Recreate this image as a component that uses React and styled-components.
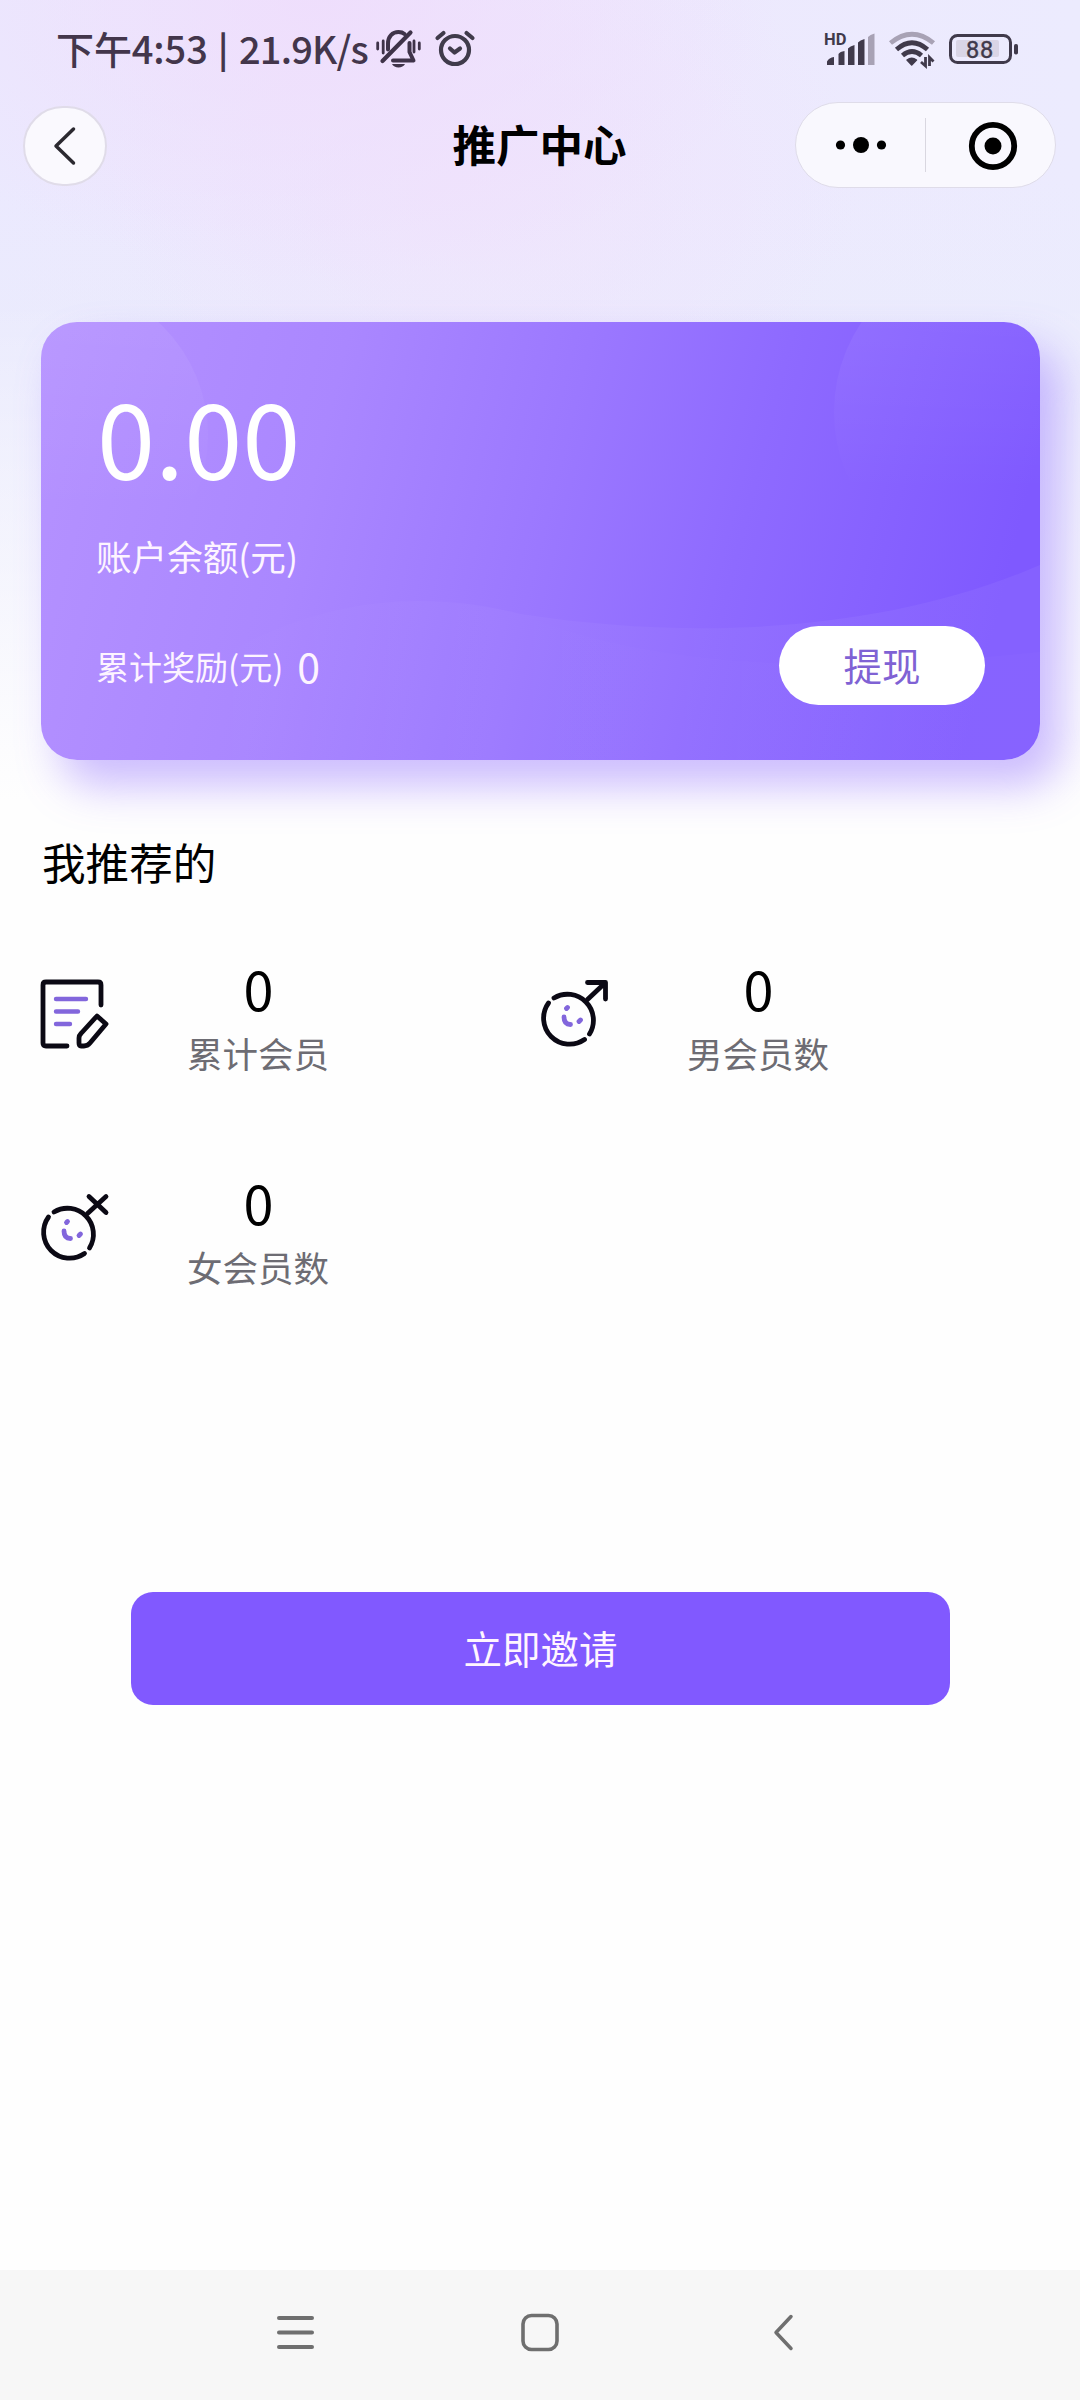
import styled, { createGlobalStyle } from 'styled-components';

const GlobalStyle = createGlobalStyle`
  * {
    box-sizing: border-box;
  }

  body {
    margin: 0;
    background: #fefefe;
    font-family: 'Noto Sans CJK SC', sans-serif;
  }

  button {
    border: 0;
    padding: 0;
    font-family: inherit;
  }

  svg {
    display: block;
    flex: none;
    overflow: visible;
  }
`;

const Page = styled.div`
  display: flex;
  flex-direction: column;
  width: 1080px;
  height: 2400px;
  overflow: hidden;
  background:
    linear-gradient(180deg, rgba(254, 254, 254, 0) 300px, #fefefe 800px),
    radial-gradient(ellipse 460px 280px at 320px 0, rgba(239, 221, 252, 0.9), rgba(239, 221, 252, 0)),
    radial-gradient(ellipse 380px 260px at 480px 180px, rgba(240, 226, 252, 0.7), rgba(240, 226, 252, 0)),
    linear-gradient(180deg, rgba(234, 237, 252, 0) 180px, rgba(234, 237, 252, 0.45) 330px),
    linear-gradient(90deg, #ebe9fe, #ede8fd 40%, #ecebfe);
`;

const StatusBar = styled.div`
  display: flex;
  justify-content: space-between;
  align-items: center;
  height: 98px;
  padding: 0 62px 0 56px;
  color: #43364b;
`;

const StatusGroup = styled.div`
  display: flex;
  align-items: center;
  gap: ${({ $gap }) => $gap || 0}px;
`;

const StatusText = styled.span`
  width: ${({ $width }) => $width}px;
  padding-bottom: 3px;
  font-size: 38px;
  font-weight: 500;
  line-height: 54px;
  letter-spacing: ${({ $spacing }) => $spacing || 0}px;
  white-space: nowrap;
`;

const StatusSeparator = styled.span`
  width: 21px;
  padding-bottom: 4px;
  font-size: 35px;
  font-weight: 700;
  line-height: 54px;
`;

const StatusIcons = styled.div`
  display: flex;
  align-items: center;
  gap: 14px;
`;

const NavBar = styled.header`
  display: flex;
  justify-content: space-between;
  align-items: center;
  height: 94px;
  padding: 0 24px 0 23px;
`;

const NavSide = styled.div`
  display: flex;
  width: 261px;
  justify-content: ${({ $end }) => ($end ? 'flex-end' : 'flex-start')};
`;

const BackButton = styled.button`
  display: flex;
  align-items: center;
  justify-content: center;
  width: 84px;
  height: 80px;
  margin-top: 1px;
  border: 2px solid #e0dce9;
  border-radius: 42px;
  background: #faf9fe;
`;

const Title = styled.h1`
  margin: 0;
  padding-bottom: 2px;
  font-size: 43.5px;
  font-weight: 700;
  line-height: 64px;
  color: #000;
`;

const Capsule = styled.div`
  display: flex;
  align-items: center;
  width: 261px;
  height: 86px;
  border: 1px solid #dfdce9;
  border-radius: 43px;
  background: #f9f8fe;
`;

const CapsuleButton = styled.button`
  display: flex;
  width: 129px;
  align-items: center;
  justify-content: center;
  padding-left: ${({ $shift }) => $shift || 0}px;
  background: none;
`;

const Divider = styled.span`
  width: 1px;
  height: 54px;
  background: #d9d7e0;
`;

const Content = styled.main`
  display: flex;
  flex: 1;
  flex-direction: column;
  padding: 130px 40px 0 41px;
`;

const CardShadow = styled.div`
  border-radius: 36px;
  box-shadow: 20px 26px 44px rgba(130, 90, 255, 0.4);
`;

const Card = styled.section`
  display: flex;
  flex-direction: column;
  position: relative;
  height: 438px;
  padding: 58px 55px 0;
  border-radius: 36px;
  overflow: hidden;
  color: #fff;
  background: linear-gradient(104deg, #b592ff, #aa87ff 28%, #9b78ff 50%, #8e6aff 68%, #7f59ff 93%);
`;

const CardShapes = styled.svg`
  position: absolute;
  top: 0;
  left: 0;
`;

const Balance = styled.div`
  position: relative;
  padding-left: 1px;
  font-size: 104.6px;
  line-height: 110px;
`;

const BalanceLabel = styled.div`
  position: relative;
  margin-top: 39px;
  font-size: 35.6px;
  line-height: 54px;
  color: #fdf4ff;
`;

const CardFooter = styled.div`
  display: flex;
  position: relative;
  justify-content: space-between;
  align-items: center;
  margin-top: 43px;
  height: 79px;
`;

const Reward = styled.div`
  display: flex;
  align-items: center;
  gap: 14px;
  font-size: 33px;
  color: #fdf4ff;
`;

const RewardValue = styled.span`
  padding-bottom: 2px;
  font-size: 41px;
`;

const WithdrawButton = styled.button`
  width: 206px;
  height: 79px;
  padding-bottom: 3px;
  border-radius: 40px;
  background: #fff;
  font-size: 38.5px;
  color: #7f62d4;
`;

const SectionTitle = styled.h2`
  margin: 69px 0 0 1px;
  font-size: 43.6px;
  font-weight: 400;
  line-height: 64px;
  color: #000;
`;

const Stats = styled.div`
  display: grid;
  grid-template-columns: 500px 499px;
  grid-auto-rows: 213.5px;
  margin-top: 65px;
`;

const Stat = styled.div`
  display: flex;
  align-items: flex-start;
`;

const StatIcon = styled.svg`
  margin-top: 22px;
`;

const StatText = styled.div`
  display: flex;
  flex-direction: column;
  align-items: center;
  width: 144px;
  margin-left: 77px;
`;

const StatValue = styled.span`
  padding-left: 1px;
  font-size: 54px;
  line-height: 60px;
  color: #000;
`;

const StatLabel = styled.span`
  margin-top: 9px;
  font-size: 35.5px;
  line-height: 52px;
  color: #6d6c73;
  white-space: nowrap;
`;

const InviteButton = styled.button`
  align-self: center;
  width: 819px;
  height: 113px;
  margin-top: 207px;
  padding-bottom: 3px;
  border-radius: 22px;
  background: #8159ff;
  font-size: 38.5px;
  color: #fff5ff;
`;

const SystemNav = styled.nav`
  display: flex;
  align-items: center;
  justify-content: space-between;
  height: 130px;
  padding: 0 285px 4px 276px;
  background: #f7f7f7;
`;

const HomeIcon = styled.svg`
  margin-right: 8px;
`;

const MutedBellIcon = () => (
  <svg width="45" height="38" viewBox="0 0 45 38" fill="none" stroke="#3f3349" strokeLinecap="round" strokeLinejoin="round">
    <path d="M6.500 31 L34.500 2.500" strokeWidth="4.200" />
    <path d="M12 19.500 V13.500 C12 6.500 16.500 2 22.500 2 C25 2 27 2.700 28.500 4" strokeWidth="4" />
    <path d="M33.500 13 V22 L37.500 30.500 H17" strokeWidth="4" />
    <path d="M1.700 13 V19 M7.200 11 V23 M38 11 V22 M43.300 13 V19" strokeWidth="2.800" />
    <path d="M16 34 H29 C27 38.500 18 38.500 16 34Z" fill="#3f3349" stroke="none" />
  </svg>
);

const AlarmIcon = () => (
  <svg width="40" height="38" viewBox="0 0 40 38" fill="none" stroke="#403b4b" strokeLinecap="round" strokeLinejoin="round">
    <circle cx="20" cy="20" r="14" strokeWidth="4.200" />
    <path d="M2.500 8 L8.500 3 M37.500 8 L31.500 3" strokeWidth="4.200" />
    <path d="M15 18.500 L19.500 22.500 L25 18.500" strokeWidth="4.200" />
  </svg>
);

const SignalIcon = () => (
  <svg width="50" height="34" viewBox="0 0 50 34" fill="#403a4b">
    <text x="-1" y="12.500" fontSize="16.500" fontWeight="700" fontFamily="Roboto, sans-serif">HD</text>
    <path d="M2 33 V29.500 Q4 25.500 9 25 V33Z M13.500 33 V22 Q15 19.500 19.500 19 V33Z M23 33 V16.500 Q25 14 29.500 13 V33Z M33 33 V10.500 Q35 8 39.500 7 V33Z" />
    <path d="M43 33 V5 Q45 2.500 49.500 1.500 V33Z" fill="#a8a2b5" />
  </svg>
);

const WifiIcon = () => (
  <svg width="46" height="34" viewBox="0 0 46 34" fill="none" stroke="#403a4b" strokeWidth="4.800">
    <path d="M1.500 11 Q23 -6.500 44.500 11" stroke="#a8a2b5" />
    <path d="M7.500 17.500 Q23 4 38.500 17.500" />
    <path d="M13.500 23.500 Q23 15.500 32.500 23.500" />
    <path d="M18 28 Q22.700 24.500 27.500 28 L22.700 33Z" fill="#403a4b" stroke="#403a4b" strokeWidth="1.500" strokeLinejoin="round" />
    <path d="M36.500 25 V34 L32 30 M40.500 34 V25.500 L44.500 29.500" strokeWidth="2.800" />
  </svg>
);

const BatteryIcon = () => (
  <svg width="69" height="30" viewBox="0 0 69 30">
    <rect x="1.500" y="1.500" width="60" height="27" rx="7" fill="none" stroke="#403a4b" strokeWidth="3" />
    <rect x="7" y="6" width="43" height="17" rx="2" fill="#d9d5e6" />
    <text x="31" y="23.500" fontSize="23.500" fontWeight="400" fontFamily="Roboto, sans-serif" textAnchor="middle" letterSpacing="0.800" fill="#403a4b" stroke="#403a4b" strokeWidth="0.400">88</text>
    <rect x="65" y="10" width="4" height="10.500" rx="1.800" fill="#403a4b" />
  </svg>
);

const NoteIcon = () => (
  <StatIcon width="68" height="68" viewBox="0 0 68 68" fill="none" strokeWidth="4.800" strokeLinecap="round" strokeLinejoin="round">
    <path d="M26 66 H5 Q2 66 2 63 V5 Q2 2 5 2 H57 Q60 2 60 5 V25" stroke="#0b0914" />
    <path d="M15 19 H45 M15 31.500 H37 M15 44 H29" stroke="#8266dc" strokeWidth="4.400" />
    <path d="M56 36 L65 44 L49 63 Q46.500 66 43 66 H40 Q38 66 38 63 V58 Q38 55.500 40 53.500Z" stroke="#0b0914" />
  </StatIcon>
);

const MemberIcon = ({ male }) => (
  <StatIcon width="68" height="68" viewBox="0 0 68 68" fill="none" strokeWidth="4.800" strokeLinecap="round" strokeLinejoin="round">
    <path d="M13 18 A26 26 0 0 1 48.500 54" stroke="#0b0914" />
    <path d="M7.500 23 A26 26 0 0 0 43.500 59.500" stroke="#0b0914" />
    {male ? (
      <path d="M46.500 19.500 L64 3 M46.500 2.500 H64.500 V19" stroke="#0b0914" />
    ) : (
      <path d="M46.500 19.500 L65 2.500 M48 2.500 L65 18.500" stroke="#0b0914" />
    )}
    <path d="M25.500 28.500 L26.500 27.500 M38 41.500 L39.500 40" stroke="#8266dc" />
    <path d="M23 37 Q23 44.500 29.500 44.500" stroke="#8266dc" />
  </StatIcon>
);

const stats = [
  { label: '累计会员', value: 0, icon: <NoteIcon /> },
  { label: '男会员数', value: 0, icon: <MemberIcon male /> },
  { label: '女会员数', value: 0, icon: <MemberIcon /> },
];

const App = () => {
  return (
    <>
      <GlobalStyle />
      <Page>
        <StatusBar>
          <StatusGroup $gap={14}>
            <StatusGroup>
              <StatusText $width={162} $spacing={-0.1}>下午4:53</StatusText>
              <StatusSeparator>|</StatusSeparator>
              <StatusText $width={123} $spacing={-0.8}>21.9K/s</StatusText>
            </StatusGroup>
            <MutedBellIcon />
            <AlarmIcon />
          </StatusGroup>
          <StatusIcons>
            <SignalIcon />
            <WifiIcon />
            <BatteryIcon />
          </StatusIcons>
        </StatusBar>
        <NavBar>
          <NavSide>
            <BackButton aria-label="back">
              <svg width="24" height="40" viewBox="0 0 24 40" fill="none" stroke="#2b2930" strokeWidth="3.500" strokeLinecap="round" strokeLinejoin="round">
                <path d="M20.500 3 L3 20 L20.500 37" />
              </svg>
            </BackButton>
          </NavSide>
          <Title>推广中心</Title>
          <NavSide $end>
            <Capsule>
              <CapsuleButton aria-label="more">
                <svg width="52" height="18" viewBox="0 0 52 18">
                  <circle cx="5.500" cy="9" r="4.600" />
                  <circle cx="26" cy="9" r="8" />
                  <circle cx="46.500" cy="9" r="4.600" />
                </svg>
              </CapsuleButton>
              <Divider />
              <CapsuleButton $shift={5} aria-label="close">
                <svg width="48" height="48" viewBox="0 0 48 48">
                  <circle cx="24" cy="25" r="21.200" fill="none" stroke="#000" strokeWidth="5.800" />
                  <circle cx="24" cy="25" r="8.500" />
                </svg>
              </CapsuleButton>
            </Capsule>
          </NavSide>
        </NavBar>
        <Content>
          <CardShadow>
            <Card>
              <CardShapes width="999" height="438" viewBox="0 0 999 438" fill="none">
                <defs>
                  <linearGradient id="bubble" x1="0" y1="0" x2="0" y2="1">
                    <stop offset="0.1" stopColor="#fff" stopOpacity="0.07" />
                    <stop offset="0.75" stopColor="#fff" stopOpacity="0" />
                  </linearGradient>
                  <linearGradient id="wave" x1="0" y1="0" x2="1" y2="0">
                    <stop offset="0.15" stopColor="#fff" stopOpacity="0" />
                    <stop offset="0.45" stopColor="#fff" stopOpacity="0.03" />
                    <stop offset="1" stopColor="#fff" stopOpacity="0.05" />
                  </linearGradient>
                </defs>
                <circle cx="14" cy="113" r="153" fill="url(#bubble)" />
                <circle cx="953" cy="90" r="160" fill="url(#bubble)" />
                <path d="M160 345 C260 285 360 262 480 292 C660 320 850 308 999 243 V438 H0 Z" fill="url(#wave)" />
                <path d="M480 292 C620 350 800 350 999 330 V438 H300 Z" fill="url(#wave)" opacity="0.3" />
              </CardShapes>
              <Balance>0.00</Balance>
              <BalanceLabel>账户余额(元)</BalanceLabel>
              <CardFooter>
                <Reward>
                  累计奖励(元)
                  <RewardValue>0</RewardValue>
                </Reward>
                <WithdrawButton>提现</WithdrawButton>
              </CardFooter>
            </Card>
          </CardShadow>
          <SectionTitle>我推荐的</SectionTitle>
          <Stats>
            {stats.map(({ label, value, icon }) => (
              <Stat key={label}>
                {icon}
                <StatText>
                  <StatValue>{value}</StatValue>
                  <StatLabel>{label}</StatLabel>
                </StatText>
              </Stat>
            ))}
          </Stats>
          <InviteButton>立即邀请</InviteButton>
        </Content>
        <SystemNav>
          <svg width="39" height="38" viewBox="0 0 39 38" stroke="#6f6f6f" strokeWidth="4" strokeLinecap="round">
            <path d="M3 4 H36 M3 18.500 H36 M3 33 H36" />
          </svg>
          <HomeIcon width="38" height="38" viewBox="0 0 38 38" fill="none" stroke="#6f6f6f" strokeWidth="3.600">
            <rect x="2" y="1.500" width="34" height="34" rx="8.500" />
          </HomeIcon>
          <svg width="22" height="38" viewBox="0 0 22 38" fill="none" stroke="#6f6f6f" strokeWidth="3.500" strokeLinecap="round" strokeLinejoin="round">
            <path d="M18 2.500 L3 18.500 L18 34.500" />
          </svg>
        </SystemNav>
      </Page>
    </>
  );
};

export default App;
